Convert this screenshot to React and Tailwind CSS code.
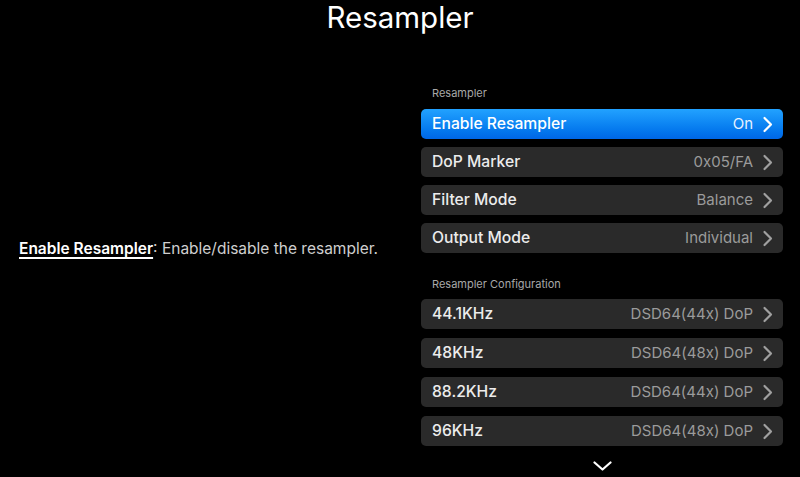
import React from "react";

const general = [
  { label: "Enable Resampler", value: "On", active: true },
  { label: "DoP Marker", value: "0x05/FA" },
  { label: "Filter Mode", value: "Balance" },
  { label: "Output Mode", value: "Individual" },
];

const config = [
  { label: "44.1KHz", value: "DSD64(44x) DoP" },
  { label: "48KHz", value: "DSD64(48x) DoP" },
  { label: "88.2KHz", value: "DSD64(44x) DoP" },
  { label: "96KHz", value: "DSD64(48x) DoP" },
];

const Chevron = ({ className }) => (
  <svg width="11" height="17" viewBox="0 0 11 17" className={className} fill="none">
    <path d="M2.5 2l6.5 6.5-6.5 6.5" stroke="currentColor" strokeWidth="2.2" strokeLinecap="round" strokeLinejoin="round" />
  </svg>
);

const Row = ({ label, value, active }) => (
  <div
    className={
      "flex items-center h-[30px] rounded-[5px] pl-[11px] pr-[10px] " +
      (active ? "bg-gradient-to-b from-[#22a2ff] to-[#0066e6]" : "bg-[#2a2a2a]")
    }
  >
    <span className={"text-[15.7px] font-medium " + (active ? "text-white" : "text-[#ececec]")}>{label}</span>
    <span className={"ml-auto text-[15px] " + (active ? "text-[#e8f2ff]" : "text-[#9b9b9b]")}>{value}</span>
    <Chevron className={"ml-[9px] " + (active ? "text-white" : "text-[#a0a0a0]")} />
  </div>
);

const App = () => {
  return (
    <div className="w-[800px] h-[477px] bg-black text-white overflow-hidden font-['Inter',sans-serif]">
      <h1 className="text-center text-[29.5px] leading-[34px] pt-0">Resampler</h1>

      <div className="flex">
        {/* Help text */}
        <div className="w-[421px] flex items-center pl-[19px]">
          <p className="text-[15.5px] text-[#cfcfcf] -mt-[8px]">
            <span className="font-semibold text-white underline underline-offset-[3px] decoration-[1.5px]">Enable Resampler</span>
            : Enable/disable the resampler.
          </p>
        </div>

        {/* Settings list */}
        <div className="w-[362px] pt-[52px]">
          <div className="text-[11px] text-[#a8a8a8] pl-[11px] mb-[9px] leading-[14px]">Resampler</div>
          <div className="flex flex-col gap-[8px]">
            {general.map((r) => (
              <Row key={r.label} {...r} />
            ))}
          </div>

          <div className="text-[11px] text-[#a8a8a8] pl-[11px] mt-[24px] mb-[8px] leading-[14px]">
            Resampler Configuration
          </div>
          <div className="flex flex-col gap-[9px]">
            {config.map((r) => (
              <Row key={r.label} {...r} />
            ))}
          </div>

          <div className="flex justify-center mt-[15px] pl-[1px]">
            <svg width="19" height="10" viewBox="0 0 19 10" fill="none">
              <path d="M1.5 1.5l8 7 8-7" stroke="white" strokeWidth="2.2" strokeLinecap="round" strokeLinejoin="round" />
            </svg>
          </div>
        </div>
      </div>
    </div>
  );
};

export default App;
